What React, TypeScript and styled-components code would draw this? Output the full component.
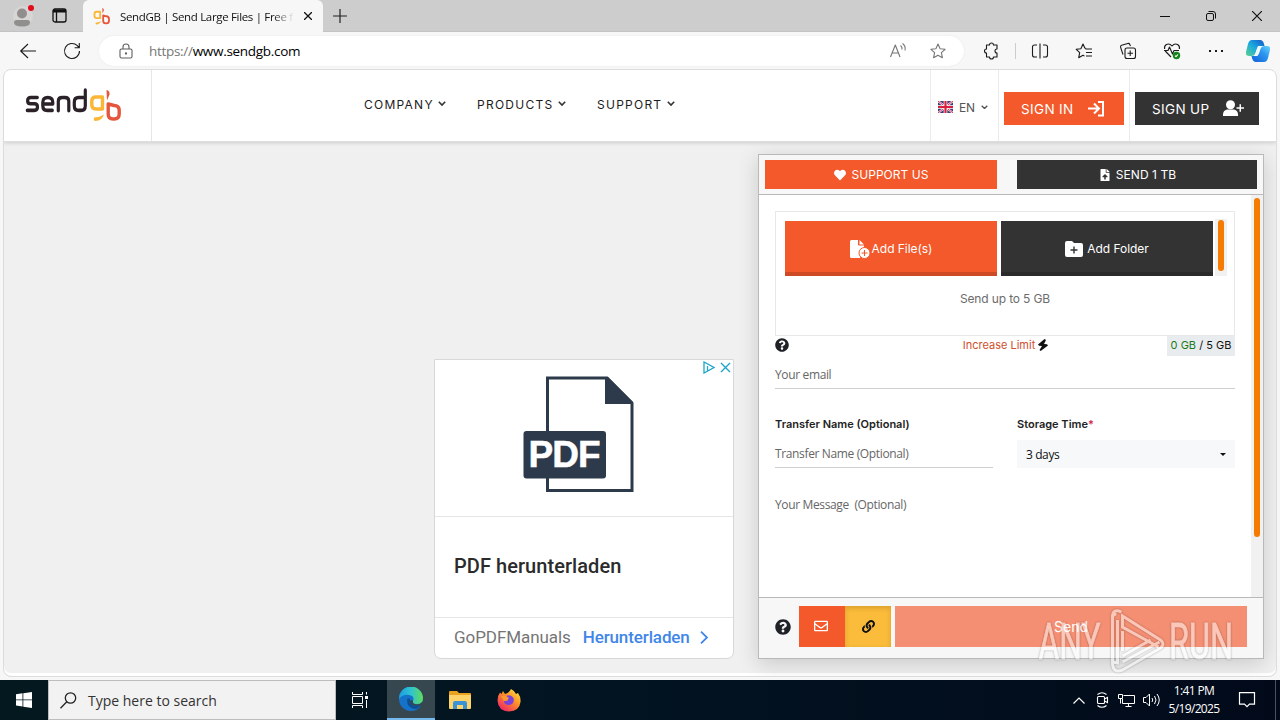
import type { ReactNode } from "react";
import styled, { createGlobalStyle } from "styled-components";
import { FaHeart, FaQuestionCircle, FaLink, FaRegEnvelope, FaFileUpload } from "react-icons/fa";

const colors = {
  orange: "#f3592a",
  dark: "#333333",
  yellow: "#fbbc3b",
  scroll: "#f57c00",
  navy: "#2c3a4b",
};

const GlobalStyle = createGlobalStyle`
  * {
    box-sizing: border-box;
  }
  body {
    margin: 0;
    overflow: hidden;
    font-family: Inter, "Liberation Sans", sans-serif;
  }
  svg {
    display: block;
    flex-shrink: 0;
  }
`;

export default function App() {
  return (
    <Screen>
      <GlobalStyle />
      <TitleBar />
      <Toolbar />
      <Viewport>
        <Page>
          <SiteHeader />
          <Main>
            <AdCard />
            <UploadPanel />
          </Main>
        </Page>
      </Viewport>
      <Taskbar />
      <Watermark />
    </Screen>
  );
}

const Screen = styled.div`
  position: relative;
  display: flex;
  flex-direction: column;
  width: 1280px;
  height: 720px;
  overflow: hidden;
  background: #f7f7f7;
`;

/* ---------- browser chrome ---------- */

const TitleRow = styled.div`
  display: flex;
  height: 32px;
  background: #cdcdcd;
  border-bottom: 1px solid #c3c3c3;
`;

const TitleTools = styled.div`
  display: flex;
  align-items: center;
  gap: 17px;
  width: 83px;
  padding-left: 13px;
`;

const Tab = styled.div`
  display: flex;
  align-items: center;
  width: 240px;
  height: 32px;
  padding-left: 10px;
  background: #f7f7f7;
  border-radius: 6px 6px 0 0;
`;

const TabTitle = styled.span`
  width: 174px;
  margin-left: 9px;
  white-space: nowrap;
  font-family: "Open Sans", sans-serif;
  font-size: 11.500px;
  letter-spacing: -0.33px;
  color: #111;
  mask-image: linear-gradient(90deg, #000 88%, transparent 100%);
`;

const TabClose = styled.svg`
  margin-left: 10px;
`;

const NewTab = styled.svg`
  margin: 9px 0 0 10px;
`;

const WindowButtons = styled.div`
  display: flex;
  margin-left: auto;
  height: 31px;
`;

const WindowButton = styled.span`
  display: flex;
  align-items: center;
  justify-content: center;
  width: 46px;
`;

function GbShapes() {
  return (
    <g fill="none" strokeWidth="3.400" strokeLinejoin="round">
      <path d="M77.500 21V9H71q-4.200 0-4.200 4v4q0 4 4.200 4z" stroke="#fbb636" />
      <path d="M83.200 16v10q0 5 5 5h1q5 0 5-5v-3.500q0-5-5-5z" stroke="#e5573c" />
      <path d="M69 29.500q6-.2 10-3-2 6.500-8.500 6.500-2.300 0-1.500-3.500z" fill="#fbb636" />
      <path d="M81.500 2q3.500.5 3 4.500l-2.500 6z" fill="#e5573c" />
    </g>
  );
}

function TitleBar() {
  return (
    <TitleRow>
      <TitleTools>
        <svg width="22" height="24" viewBox="0 0 22 24">
          <circle cx="10" cy="12" r="10" fill="#d8d6d4" />
          <circle cx="9" cy="9.500" r="5" fill="#918f8d" />
          <path d="M1 18.500q0-2.500 2.500-2.500h11q2.500 0 2.500 2.500 0 4-8 4t-8-4z" fill="#918f8d" />
          <circle cx="18" cy="4" r="3" fill="#e00b1c" />
        </svg>
        <svg width="15" height="15" viewBox="0 0 15 15" fill="none" stroke="#111">
          <rect x="1" y="1" width="13" height="13" rx="2" strokeWidth="1.300" />
          <path d="M1 3h13" strokeWidth="3" />
          <path d="M4.500 3v11" strokeWidth="1.300" />
        </svg>
      </TitleTools>
      <Tab>
        <svg width="18" height="18" viewBox="64 0 34 34">
          <GbShapes />
        </svg>
        <TabTitle>SendGB | Send Large Files | Free f</TabTitle>
        <TabClose width="8" height="8" viewBox="0 0 8 8" stroke="#111" strokeWidth="1.300">
          <path d="M0 0l8 8M8 0l-8 8" />
        </TabClose>
      </Tab>
      <NewTab width="14" height="14" viewBox="0 0 14 14" stroke="#222" strokeWidth="1.200">
        <path d="M7 0v14M0 7h14" />
      </NewTab>
      <WindowButtons>
        <WindowButton>
          <svg width="10" height="10" stroke="#111">
            <path d="M0 5.500h10" />
          </svg>
        </WindowButton>
        <WindowButton>
          <svg width="10" height="10" fill="none" stroke="#111">
            <rect x="0.500" y="2.500" width="7" height="7" rx="1.500" />
            <path d="M2.500.5H7q2.500 0 2.500 2.500v4.500" />
          </svg>
        </WindowButton>
        <WindowButton>
          <svg width="10" height="10" stroke="#111" strokeWidth="1.200">
            <path d="M0 0l10 10M10 0L0 10" />
          </svg>
        </WindowButton>
      </WindowButtons>
    </TitleRow>
  );
}

const ToolbarRow = styled.div`
  display: flex;
  align-items: center;
  height: 37px;
  padding-left: 6px;
  background: #f7f7f7;
`;

const ToolSlot = styled.span<{ $width?: number }>`
  display: flex;
  align-items: center;
  justify-content: center;
  width: ${({ $width }) => $width ?? 44}px;
  flex-shrink: 0;
`;

const AddressBar = styled.div`
  display: flex;
  align-items: center;
  width: 865px;
  height: 30px;
  margin: 1px 5px 0 5px;
  padding-left: 19px;
  border-radius: 15px;
  background: #fff;
  box-shadow: 0 0 2px #e4e4e4;
`;

const Url = styled.span`
  margin: 0 auto 0 15px;
  font-family: "Open Sans", sans-serif;
  font-size: 13.500px;
  letter-spacing: -0.3px;
  color: #000;

  span {
    color: #767676;
  }
`;

const ToolDivider = styled.span`
  width: 1px;
  height: 16px;
  margin: 0 2px;
  background: #ccc;
`;

const starPath = "M8 1l2.100 4.700 5 .6-3.700 3.400 1 5L8 12.200l-4.400 2.500 1-5L.9 6.300l5-.6z";

function ToolIcon({ children, color = "#1b1b1b" }: { children: ReactNode; color?: string }) {
  return (
    <svg
      width="16"
      height="16"
      viewBox="0 0 16 16"
      fill="none"
      stroke={color}
      strokeWidth="1.100"
      strokeLinejoin="round"
      overflow="visible"
    >
      {children}
    </svg>
  );
}

function Toolbar() {
  return (
    <ToolbarRow>
      <ToolSlot>
        <ToolIcon>
          <path d="M16 8H.5M8 1L.7 8 8 15" />
        </ToolIcon>
      </ToolSlot>
      <ToolSlot>
        <ToolIcon>
          <path d="M15.500 8a7.500 7.500 0 1 1-2.200-5.300L15 4.500M15.300 0v4.700h-4.700" />
        </ToolIcon>
      </ToolSlot>
      <AddressBar>
        <ToolIcon color="#5f5f5f">
          <rect x="2" y="6" width="12" height="9" rx="1.500" />
          <path d="M5 6V4a3 3 0 0 1 6 0v2" />
          <circle cx="8" cy="10.500" r=".6" fill="#5f5f5f" />
        </ToolIcon>
        <Url>
          <span>https://</span>www.sendgb.com
        </Url>
        <ToolSlot $width={40}>
          <ToolIcon color="#767676">
            <path d="M.5 14L5.300 2 10 14M2.300 10h6M10.500 2.500q2 1.500 1.500 4M12.500.5q3.500 2.500 2.500 7" />
          </ToolIcon>
        </ToolSlot>
        <ToolSlot $width={40}>
          <ToolIcon color="#767676">
            <path d={starPath} />
          </ToolIcon>
        </ToolSlot>
        <ToolSlot $width={6} />
      </AddressBar>
      <ToolSlot>
        <ToolIcon>
          <path d="M3.500 2h3a2 2 0 0 1 4 0h3.500v4a2 2 0 1 0 0 4v4h-3.500a2 2 0 0 1-4 0h-3v-4a2 2 0 1 1 0-4z" />
        </ToolIcon>
      </ToolSlot>
      <ToolDivider />
      <ToolSlot>
        <ToolIcon>
          <path d="M5 2H2.500Q.5 2 .5 4v8q0 2 2 2H5M11 2h2.500q2 0 2 2v8q0 2-2 2H11M8 .5v15" />
        </ToolIcon>
      </ToolSlot>
      <ToolSlot>
        <ToolIcon>
          <path d="M10 5.500L8.800 5 7 1 4.900 5.700l-4.700.6 3.500 3.400-1 5L7 12.200l1.500.9M9.500 6H16M10 9.500h6M10 13h6" />
        </ToolIcon>
      </ToolSlot>
      <ToolSlot>
        <ToolIcon>
          <rect x="5" y="5" width="10.500" height="10.500" rx="2" />
          <path d="M10.200 7.500v5.500M7.500 10.200H13M3 11.500L.6 4.300Q.2 2.800 1.600 2.300L7.800.5q1.500-.4 2 1L10.500 3" />
        </ToolIcon>
      </ToolSlot>
      <ToolSlot>
        <ToolIcon>
          <path d="M7 14L1.200 8M.6 6Q0 3 2.400 1.500 5.500 0 8 3q2.500-3 5.600-1.500Q16 3 15.400 6M0 7.500h4L5.500 4l3 7L10 7.500h5" />
          <circle cx="12.500" cy="12.500" r="3.700" fill="#13841c" stroke="none" />
          <path d="M11 12.700l1 1 2-2.200" stroke="#fff" />
        </ToolIcon>
      </ToolSlot>
      <ToolSlot>
        <ToolIcon>
          <path d="M1 8h2M7 8h2M13 8h2" strokeWidth="2" />
        </ToolIcon>
      </ToolSlot>
      <ToolSlot $width={40}>
        <svg width="24" height="22" viewBox="0 0 24 22">
          <defs>
            <linearGradient id="copilotTop" x1="0" y1="1" x2="1" y2="0">
              <stop offset="0" stopColor="#5bd18b" />
              <stop offset=".5" stopColor="#1ba9e0" />
              <stop offset="1" stopColor="#1454c8" />
            </linearGradient>
            <linearGradient id="copilotBottom" x1="0" y1="1" x2="1" y2="0">
              <stop offset="0" stopColor="#1060d8" />
              <stop offset=".6" stopColor="#2d97f0" />
              <stop offset="1" stopColor="#6ad7ff" />
            </linearGradient>
          </defs>
          <path d="M6 0h8q3 0 4 4l.5 2h-4q-3 0-4 4l-1 3q-1 3-4 3H3q-4 0-3-4l2-8q1-4 4-4z" fill="url(#copilotTop)" />
          <path d="M18 22h-8q-3 0-4-4l-.5-2h4q3 0 4-4l1-3q1-3 4-3H21q4 0 3 4l-2 8q-1 4-4 4z" fill="url(#copilotBottom)" />
          <path d="M12 6h3l-3.500 10H8.500z" fill="#eef9ff" />
        </svg>
      </ToolSlot>
    </ToolbarRow>
  );
}

/* ---------- web page ---------- */

const Viewport = styled.div`
  height: 611px;
  padding: 0 3px 3px;
`;

const Page = styled.div`
  height: 608px;
  overflow: hidden;
  border: 1px solid #dcdcdc;
  border-radius: 8px;
  background: #f0f0f0;
  box-shadow: inset 0 -3px #fff;
`;

const Header = styled.header`
  display: flex;
  height: 72px;
  background: #fff;
  border-bottom: 1px solid #dedede;
  box-shadow: 0 1px 4px rgba(0, 0, 0, 0.15);
`;

const LogoCell = styled.div`
  display: flex;
  width: 148px;
  padding: 18px 0 0 21px;
  border-right: 1px solid #e6e6e6;
`;

const Nav = styled.nav`
  display: flex;
  gap: 31px;
  width: 778px;
  padding: 27px 0 0 212px;
`;

const NavItem = styled.span<{ $width: number }>`
  display: flex;
  align-items: center;
  justify-content: space-between;
  width: ${({ $width }) => $width}px;
  height: 14px;
  font-size: 12px;
  letter-spacing: 1.250px;
  white-space: nowrap;
  color: #1c1c1c;
`;

const HeaderCell = styled.div<{ $width: number }>`
  display: flex;
  align-items: flex-start;
  width: ${({ $width }) => $width}px;
  padding: 22px 0 0 5px;
  border-left: 1px solid #ebebeb;
`;

const Language = styled.span`
  display: flex;
  align-items: center;
  gap: 6px;
  height: 30px;
  padding-left: 2px;
  font-size: 12px;
  letter-spacing: -0.1px;
  color: #555;
`;

const HeaderButton = styled.button<{ $bg: string; $width: number }>`
  display: flex;
  align-items: center;
  justify-content: space-between;
  width: ${({ $width }) => $width}px;
  height: 33px;
  padding: 0 15px 0 17px;
  border: 0;
  background: ${({ $bg }) => $bg};
  color: #fff;
  font-family: inherit;
  font-size: 13.500px;
  letter-spacing: 0.35px;
  white-space: nowrap;
`;

function Chevron({ size = 8, color = "#333" }: { size?: number; color?: string }) {
  return (
    <svg width={size} height={size * 0.7} viewBox="0 0 10 7" fill="none" stroke={color} strokeWidth="2">
      <path d="M1 1l4 4 4-4" />
    </svg>
  );
}

function Logo() {
  return (
    <svg width="98" height="36" viewBox="0 0 98 36">
      <g
        transform="translate(.3 -.1) scale(1 1.113)"
        fill="none"
        stroke="#2a2228"
        strokeWidth="3.200"
        strokeLinecap="round"
        strokeLinejoin="round"
      >
        <path d="M12 8.700H5.500Q2.300 8.700 2.300 11.500T5.500 14.300H9q3.200 0 3.200 2.900T9 20.200H2" />
        <path d="M17.500 14.500h10v-1.500q0-4.300-5-4.300t-5 4.300v3q0 4.200 4.500 4.200h5" />
        <path d="M33 20.500V12q0-3.300 4-3.300h2.500q4 0 4 3.300v8.500" />
        <path d="M60 2v14q0 4.200-4.200 4.200h-2.500q-4.300 0-4.300-4.200v-3.300q0-4 4.300-4h6.200" />
      </g>
      <GbShapes />
    </svg>
  );
}

function Flag() {
  return (
    <svg width="15" height="12" viewBox="0 0 15 12">
      <rect width="15" height="12" rx="1" fill="#3f3c7c" />
      <path d="M0 0l15 12M15 0L0 12" stroke="#fff" strokeWidth="2" />
      <path d="M0 0l15 12M15 0L0 12" stroke="#d8304a" strokeWidth="1" />
      <path d="M7.500 0v12M0 6h15" stroke="#fff" strokeWidth="3.600" />
      <path d="M7.500 0v12M0 6h15" stroke="#d8203c" strokeWidth="2.200" />
    </svg>
  );
}

function SiteHeader() {
  return (
    <Header>
      <LogoCell>
        <Logo />
      </LogoCell>
      <Nav>
        <NavItem $width={82}>
          COMPANY <Chevron />
        </NavItem>
        <NavItem $width={89}>
          PRODUCTS <Chevron />
        </NavItem>
        <NavItem $width={78}>
          SUPPORT <Chevron />
        </NavItem>
      </Nav>
      <HeaderCell $width={68}>
        <Language>
          <Flag />
          EN
          <Chevron size={7} color="#555" />
        </Language>
      </HeaderCell>
      <HeaderCell $width={131}>
        <HeaderButton $bg={colors.orange} $width={120}>
          SIGN IN
          <svg width="21" height="18" viewBox="0 0 21 18" fill="none" stroke="#fff" strokeWidth="2">
            <path d="M0 8.500h10M6 3.500l5 5-5 5M10 2h5v13.500h-5" />
          </svg>
        </HeaderButton>
      </HeaderCell>
      <HeaderCell $width={145}>
        <HeaderButton $bg={colors.dark} $width={124}>
          SIGN UP
          <svg width="21" height="18" viewBox="0 0 21 18" fill="#fff">
            <circle cx="7.500" cy="4.800" r="4.500" />
            <path d="M0 16v-1.500q0-4 4-5h7q4 1 4 5V16zM13.500 7.200h3v-3h1.500v3h3v1.500h-3v3h-1.500v-3h-3z" />
          </svg>
        </HeaderButton>
      </HeaderCell>
    </Header>
  );
}

const Main = styled.main`
  display: flex;
  align-items: flex-end;
  gap: 24px;
  height: 517px;
  padding-left: 430px;
`;

/* ---------- advertisement ---------- */

const Ad = styled.aside`
  display: flex;
  flex-direction: column;
  position: relative;
  width: 300px;
  height: 300px;
  border: 1px solid #d8d8d8;
  border-radius: 0 0 7px 7px;
  background: #fff;
  font-family: Roboto, sans-serif;
`;

const AdChoices = styled.div`
  position: absolute;
  top: 1px;
  right: 2px;
  display: flex;
  gap: 5px;
`;

const AdImage = styled.div`
  display: flex;
  height: 157px;
  padding: 16px 0 0 88px;
  border-bottom: 1px solid #e6e6e6;
`;

const AdTitle = styled.div`
  display: flex;
  align-items: center;
  height: 101px;
  padding: 0 0 2px 19px;
  border-bottom: 1px solid #e6e6e6;
  font-size: 20px;
  font-weight: 500;
  letter-spacing: 0.06px;
  color: #2b2b2b;
`;

const AdFooter = styled.div`
  display: flex;
  align-items: center;
  flex: 1;
  gap: 12px;
  padding: 0 0 2px 19px;
  font-size: 17px;
  letter-spacing: -0.07px;
  color: #757575;
`;

const AdLink = styled.span`
  display: flex;
  align-items: center;
  gap: 10px;
  font-size: 17px;
  font-weight: 500;
  letter-spacing: -0.12px;
  color: #4086e8;
`;

function AdCard() {
  return (
    <Ad>
      <AdChoices>
        <svg width="12" height="13" viewBox="0 0 12 13" fill="none" stroke="#20a5c9" strokeWidth="1.300">
          <path d="M1 1v11l10-5.500zM4.500 5v4.500" />
        </svg>
        <svg width="11" height="13" viewBox="0 0 11 13" stroke="#20a5c9" strokeWidth="1.400">
          <path d="M1 2l9 9M10 2l-9 9" />
        </svg>
      </AdChoices>
      <AdImage>
        <svg width="112" height="117" viewBox="0 0 112 117">
          <path d="M24.500 2h59.500l25 25v87.500H24.500z" fill="#fff" stroke={colors.navy} strokeWidth="3" />
          <path d="M82 1h3l25 25v2H82z" fill={colors.navy} />
          <rect x="0.500" y="55" width="82.500" height="47.500" rx="3" fill={colors.navy} />
          <text x="5.500" y="90.500" fill="#fff" fontFamily="Liberation Sans" fontWeight="700" fontSize="37" textLength="72" stroke="#fff" strokeWidth=".5">
            PDF
          </text>
        </svg>
      </AdImage>
      <AdTitle>PDF herunterladen</AdTitle>
      <AdFooter>
        GoPDFManuals
        <AdLink>
          Herunterladen
          <svg width="8" height="13" viewBox="0 0 8 13" fill="none" stroke="#4086e8" strokeWidth="1.800">
            <path d="M1 .7l6 5.800-6 5.800" />
          </svg>
        </AdLink>
      </AdFooter>
    </Ad>
  );
}

/* ---------- upload form ---------- */

const Panel = styled.section`
  display: flex;
  flex-direction: column;
  width: 506px;
  height: 505px;
  border: 1px solid #b9b9b9;
  background: #fff;
  box-shadow: 0 5px 20px rgba(0, 0, 0, 0.16);
`;

const PanelHeader = styled.div`
  display: flex;
  gap: 20px;
  height: 40px;
  padding: 5px 6px;
  background: #f7f7f7;
  border-bottom: 1px solid #b9b9b9;
`;

const HeaderAction = styled.button<{ $bg: string; $width: number }>`
  display: flex;
  align-items: center;
  justify-content: center;
  gap: 5px;
  width: ${({ $width }) => $width}px;
  height: 29px;
  border: 0;
  padding: 0 0 0 1px;
  background: ${({ $bg }) => $bg};
  color: #fff;
  font-family: inherit;
  font-size: 12px;
  letter-spacing: 0.05px;
`;

const PanelBody = styled.div`
  display: flex;
  justify-content: space-between;
  height: 402px;
  padding-left: 16px;
`;

const Form = styled.div`
  display: flex;
  flex-direction: column;
  width: 460px;
  padding-top: 16px;
`;

const Track = styled.div`
  display: flex;
  justify-content: center;
  flex-shrink: 0;
  width: 12px;
  padding-top: 3px;
  background: #f1f1f1;
`;

const Thumb = styled.div<{ $height: number }>`
  width: 6px;
  height: ${({ $height }) => $height}px;
  border-radius: 3px;
  background: ${colors.scroll};
`;

const DropZone = styled.div`
  display: flex;
  flex-direction: column;
  align-items: center;
  height: 125px;
  padding: 9px 9px 0;
  border: 1px solid #e8e8e8;
  font-size: 12px;
  letter-spacing: -0.14px;
  color: #6c6c6c;
`;

const AddRow = styled.div`
  display: flex;
  gap: 4px;
  width: 100%;
  margin-bottom: 15px;

  ${Track} {
    width: 12px;
    height: 57px;
    margin: -2px 0 0 -2px;
    padding-top: 1px;
  }
`;

const AddButton = styled.button<{ $bg: string; $edge: string }>`
  display: flex;
  align-items: center;
  justify-content: center;
  flex-shrink: 0;
  gap: 2px;
  width: 212px;
  height: 55px;
  padding: 4px 0 0;
  border: 0;
  border-bottom: 4px solid ${({ $edge }) => $edge};
  background: ${({ $bg }) => $bg};
  color: #fff;
  font-family: inherit;
  font-size: 12px;
  letter-spacing: -0.05px;
`;

const LimitRow = styled.div`
  display: flex;
  align-items: center;
  justify-content: space-between;
  height: 20px;
  padding-bottom: 2px;
  font-size: 11px;
`;

const LimitLink = styled.span`
  display: flex;
  align-items: center;
  gap: 3px;
  margin-left: 55px;
  letter-spacing: 0;
  color: #cf4f2e;
`;

const Usage = styled.span`
  width: 68px;
  height: 20px;
  margin-bottom: -2px;
  line-height: 19px;
  text-align: center;
  background: #e9ecef;
  color: #111;

  span {
    color: #1c7a1c;
  }
`;

const Field = styled.div<{ $height: number; $line?: boolean }>`
  display: flex;
  align-items: center;
  height: ${({ $height }) => $height}px;
  border-bottom: ${({ $line }) => ($line ? "1px solid #cfcfcf" : "0")};
  font-family: "Open Sans", sans-serif;
  font-size: 12px;
  letter-spacing: -0.36px;
  white-space: pre;
  color: #666;
`;

const EmailField = styled(Field)`
  padding-top: 5px;
`;

const Columns = styled.div`
  display: flex;
  gap: 24px;
  margin: 28px 0 22px;
`;

const Column = styled.div`
  display: flex;
  flex-direction: column;
  gap: 9px;
  width: 218px;
`;

const Label = styled.label`
  height: 14px;
  line-height: 14px;
  font-size: 11px;
  font-weight: 600;
  letter-spacing: 0;
  color: #222;

  span {
    color: #d6264c;
  }
`;

const Select = styled.div`
  display: flex;
  align-items: center;
  justify-content: space-between;
  height: 28px;
  padding: 0 9px;
  background: #f6f8fa;
  font-family: "Open Sans", sans-serif;
  font-size: 12px;
  letter-spacing: -0.4px;
  color: #111;
`;

const PanelFooter = styled.div`
  display: flex;
  align-items: center;
  flex: 1;
  height: 62px;
  padding: 0 16px 3px;
  background: #f7f7f7;
  border-top: 1px solid #b9b9b9;
`;

const ModeButton = styled.button<{ $bg: string; $active?: boolean }>`
  display: flex;
  align-items: center;
  justify-content: center;
  width: 46px;
  height: 41px;
  padding: ${({ $active }) => ($active ? "0" : "0 2px 1px 0")};
  border: 0;
  background: ${({ $bg }) => $bg};
  color: ${({ $active }) => ($active ? "#111" : "#fff")};
  box-shadow: ${({ $active }) => ($active ? "inset 0 2px 5px rgba(130, 80, 0, 0.28)" : "none")};
`;

const ModeButtons = styled.div`
  display: flex;
  margin: 0 4px 0 8px;
`;

const SendButton = styled.button`
  flex: 1;
  height: 41px;
  padding: 0;
  border: 0;
  background: #f58f73;
  color: #fff;
  font-family: inherit;
  font-size: 14px;
`;

function AddFileIcon() {
  return (
    <svg width="20" height="20" viewBox="0 0 20 20">
      <path d="M0 2.500Q0 1 1.500 1H8v4.500Q8 6.500 9 6.500h5V12q-4 2-4 7H1.500Q0 19 0 17.500z" fill="#fff" />
      <path d="M9.500 1L14 5.500H9.500z" fill="#fff" />
      <circle cx="14.500" cy="14" r="5.500" fill="#fff" stroke={colors.orange} />
      <path d="M14.500 11v6M11.500 14h6" stroke={colors.orange} strokeWidth="1.100" />
    </svg>
  );
}

function AddFolderIcon() {
  return (
    <svg width="20" height="16" viewBox="0 0 20 16">
      <path d="M0 2Q0 0 2 0h5l2 2h7q2 0 2 2v10q0 2-2 2H2q-2 0-2-2z" fill="#fff" />
      <path d="M9 5.500v7M5.500 9h7" stroke={colors.dark} strokeWidth="1.400" />
    </svg>
  );
}

function BoltIcon() {
  return (
    <svg width="10" height="12" viewBox="0 0 10 12" fill="#111">
      <path d="M6.500 0L0 5.500l1 1.300 3 .2L1.500 11l1.200 1L10 6.500 9 5.200l-3-.2L8 1z" />
    </svg>
  );
}

function UploadPanel() {
  return (
    <Panel>
      <PanelHeader>
        <HeaderAction $bg={colors.orange} $width={232}>
          <FaHeart size={12} />
          SUPPORT US
        </HeaderAction>
        <HeaderAction $bg={colors.dark} $width={240}>
          <FaFileUpload size={12} />
          SEND 1 TB
        </HeaderAction>
      </PanelHeader>
      <PanelBody>
        <Form>
          <DropZone>
            <AddRow>
              <AddButton $bg={colors.orange} $edge="#cd4a24">
                <AddFileIcon />
                Add File(s)
              </AddButton>
              <AddButton $bg={colors.dark} $edge="#2a2a2a">
                <AddFolderIcon />
                Add Folder
              </AddButton>
              <Track>
                <Thumb $height={51} />
              </Track>
            </AddRow>
            Send up to 5 GB
          </DropZone>
          <LimitRow>
            <FaQuestionCircle size={14} color="#1e2125" />
            <LimitLink>
              Increase Limit
              <BoltIcon />
            </LimitLink>
            <Usage>
              <span>0 GB</span> / 5 GB
            </Usage>
          </LimitRow>
          <EmailField $height={33} $line>
            Your email
          </EmailField>
          <Columns>
            <Column>
              <Label>Transfer Name (Optional)</Label>
              <Field $height={28} $line>
                Transfer Name (Optional)
              </Field>
            </Column>
            <Column>
              <Label>
                Storage Time<span>*</span>
              </Label>
              <Select>
                3 days
                <svg width="6" height="3" viewBox="0 0 6 3">
                  <path d="M0 0h6L3 3z" fill="#111" />
                </svg>
              </Select>
            </Column>
          </Columns>
          <Field $height={28}>{"Your Message  (Optional)"}</Field>
        </Form>
        <Track>
          <Thumb $height={339} />
        </Track>
      </PanelBody>
      <PanelFooter>
        <FaQuestionCircle size={16} color="#1e2125" />
        <ModeButtons>
          <ModeButton $bg={colors.orange}>
            <FaRegEnvelope size={14} />
          </ModeButton>
          <ModeButton $bg={colors.yellow} $active>
            <FaLink size={13} />
          </ModeButton>
        </ModeButtons>
        <SendButton>Send</SendButton>
      </PanelFooter>
    </Panel>
  );
}

/* ---------- windows taskbar ---------- */

const Bar = styled.footer`
  display: flex;
  height: 40px;
  background: linear-gradient(90deg, #04191f 0%, #021421 45%, #020a1a 100%);
  font-family: "Open Sans", sans-serif;
`;

const TaskButton = styled.span<{ $width?: number; $active?: boolean }>`
  display: flex;
  align-items: center;
  justify-content: center;
  width: ${({ $width }) => $width ?? 49}px;
  background: ${({ $active }) => ($active ? "#37474f" : "transparent")};
  border-bottom: ${({ $active }) => ($active ? "2px solid #76b9ed" : "0")};
`;

const SearchBox = styled.div`
  display: flex;
  align-items: center;
  gap: 11px;
  width: 288px;
  padding-left: 11px;
  border: 1px solid #bdbdbd;
  background: #f2f2f2;
  font-size: 14px;
  color: #333;
`;

const Tray = styled.div`
  display: flex;
  align-items: center;
  margin-left: auto;
  gap: 7px;
`;

const Clock = styled.div`
  width: 62px;
  margin-left: -4px;
  text-align: center;
  font-size: 12px;
  line-height: 18px;
  letter-spacing: -0.65px;
  white-space: nowrap;
  color: #fff;
`;

const ShowDesktop = styled.span`
  width: 5px;
  height: 40px;
  margin-left: 12px;
  border-left: 1px solid #4a5260;
`;

function EdgeIcon() {
  return (
    <svg width="24" height="24" viewBox="0 0 24 24">
      <defs>
        <linearGradient id="edgeTop" x1="0" x2="1">
          <stop offset="0" stopColor="#1b9de2" />
          <stop offset=".5" stopColor="#2fc3d0" />
          <stop offset="1" stopColor="#62dc5a" />
        </linearGradient>
      </defs>
      <circle cx="12" cy="12" r="12" fill="#1473c8" />
      <path d="M0 12A12 12 0 0 1 24 11q0 6-6 6-5 0-4-3 2-5-4-6Q4 7 0 12z" fill="url(#edgeTop)" />
      <path d="M8 13q0 8 8 9 4-.5 7-5-4 2.500-8 1.500-5-1.500-4-7-3-.5-3 1.500z" fill="#0c4f94" />
      <path d="M14 14q-1 3 4 3.500 3 0 6-3v4l-3 0q-8 1.500-10-3 0-4 3-1.500z" fill="#37474f" />
    </svg>
  );
}

function FirefoxIcon() {
  return (
    <svg width="24" height="24" viewBox="0 0 24 24">
      <defs>
        <linearGradient id="foxFire" x1="1" y1="0" x2=".2" y2="1">
          <stop offset="0" stopColor="#fff04a" />
          <stop offset=".45" stopColor="#ff9526" />
          <stop offset="1" stopColor="#f0206a" />
        </linearGradient>
      </defs>
      <path d="M14 1q4 2 5 5l2-1q3 4 2.500 9-1 9-11.500 9.500Q1 23 .5 12.500q0-5 2.500-8L4.500 6 6 3l2 3q4-1 6-5z" fill="url(#foxFire)" />
      <path d="M9 8q5-2 7.500 2 1.500 6-4.500 7-5 0-5-4l4-.5z" fill="#7a42d8" />
      <path d="M4 8l5 0 3 2-2 2.500-3 .5z" fill="#ff9b2b" />
    </svg>
  );
}

function Taskbar() {
  return (
    <Bar>
      <TaskButton $width={48}>
        <svg width="16" height="16" viewBox="0 0 16 16" fill="#fff">
          <path d="M0 2.200l6.500-.9v6.200H0zM7.300 1.200L16 0v7.500H7.300zM0 8.300h6.500v6.200L0 13.600zM7.300 8.300H16V16l-8.700-1.300z" />
        </svg>
      </TaskButton>
      <SearchBox>
        <svg width="17" height="17" viewBox="0 0 17 17" fill="none" stroke="#222" strokeWidth="1.300">
          <circle cx="10.500" cy="6" r="5.200" />
          <path d="M6.800 9.800L.5 16.200" />
        </svg>
        Type here to search
      </SearchBox>
      <TaskButton $width={51}>
        <svg width="20" height="16" viewBox="0 0 20 16" fill="none" stroke="#fff">
          <path d="M.5 0v2.500h10V0M.5 16v-2.500h10V16M.5 4.500h10v7H.5zM14.500 0v2.500M14.500 8v8" />
          <path d="M14.500 4v3" strokeWidth="3" />
        </svg>
      </TaskButton>
      <TaskButton $width={48} $active>
        <EdgeIcon />
      </TaskButton>
      <TaskButton>
        <svg width="22" height="20" viewBox="0 0 22 20">
          <path d="M0 2q0-1 1-1h7l2 2h11q1 0 1 1v14H0z" fill="#e9a321" />
          <path d="M0 5h22v13q0 1-1 1H1q-1 0-1-1z" fill="#fdd36a" />
          <path d="M4 19v-6q0-2 2-2h10q2 0 2 2v6h-4v-4H8v4z" fill="#3b93d6" />
        </svg>
      </TaskButton>
      <TaskButton>
        <FirefoxIcon />
      </TaskButton>
      <Tray>
        <svg width="13" height="7" viewBox="0 0 13 7" fill="none" stroke="#fff" strokeWidth="1.200">
          <path d="M.5 6.500L6 1l5.500 5.500" />
        </svg>
        <svg width="18" height="16" viewBox="0 0 18 16" fill="none" stroke="#fff" strokeWidth="1.100">
          <rect x="4.500" y="4.500" width="7" height="7" rx="1" />
          <path d="M11.500 7l3-1.500v5l-3-1.500M4.500 2.500q4.500-3.500 9 0M4.500 13.500q4.500 3.500 9 0" />
        </svg>
        <svg width="18" height="15" viewBox="0 0 18 15" fill="none" stroke="#fff">
          <path d="M5.500 2.500h11v8H4.500V6M.5 1.500h4v4h-4zM2.500 5.500v5M7.500 13.500h6M10.500 10.500v3" />
        </svg>
        <svg width="17" height="14" viewBox="0 0 17 14" fill="none" stroke="#fff">
          <path d="M.5 4.500H3L6.500 1v12L3 9.500H.5zM9 5q1.500 2 0 4M11.500 3q3 4 0 8M14 1q4.500 6 0 12" />
        </svg>
        <Clock>
          1:41 PM
          <br />
          5/19/2025
        </Clock>
        <svg width="24" height="16" viewBox="0 0 24 16" fill="none" stroke="#fff" strokeWidth="1.200">
          <path d="M7.500.7h15v11.500h-5L15 14.700l-2.500-2.500h-5z" />
        </svg>
        <ShowDesktop />
      </Tray>
    </Bar>
  );
}

/* ---------- recorder watermark ---------- */

const Mark = styled.svg`
  position: absolute;
  left: 1034px;
  top: 606px;
  opacity: 0.5;
  filter: drop-shadow(0 0 1px rgba(0, 0, 0, 0.6));
  pointer-events: none;
`;

function Watermark() {
  return (
    <Mark width="220" height="72" viewBox="0 0 220 72" fill="#fff" fontFamily="Roboto" fontSize="50">
      <text x="4.500" y="53" textLength="62" lengthAdjust="spacingAndGlyphs" stroke="#fff" strokeWidth=".8">
        ANY
      </text>
      <g transform="translate(1.5 -1)" fill="none" stroke="#fff" strokeWidth="3">
        <path d="M81 9q-4 0-4 4v44l5 1V15" />
        <path d="M86 7q-9-4-9 5v45q0 12 10 8l38-22q5-4 0-8L87 11v11l36 20M87 26v20M87 51l28-16M87 57l37-20" />
      </g>
      <text x="135" y="53" textLength="64" lengthAdjust="spacingAndGlyphs" stroke="#fff" strokeWidth=".8">
        RUN
      </text>
    </Mark>
  );
}
